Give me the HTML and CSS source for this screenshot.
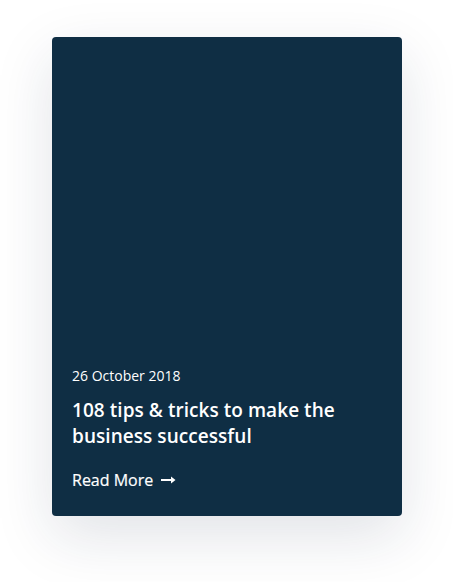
FILE: index.html
```html
<!DOCTYPE html>
<html>
<head>
<meta charset="utf-8">
<link rel="stylesheet" href="styles.css">
</head>
<body>
<div class="page">
  <article class="card">
    <div class="date">26 October 2018</div>
    <h2 class="title">108 tips &amp; tricks to make the business successful</h2>
    <a class="more" href="#">Read More
      <svg class="arrow" width="15" height="8" viewBox="0 0 15 8"><path d="M0 4H12.5" stroke="#fff" stroke-width="2"/><path d="M10 0.5L14.5 4L10 7.5Z" fill="#fff"/></svg>
    </a>
  </article>
</div>
</body>
</html>
```
FILE: styles.css
```css
html, body { margin: 0; padding: 0; background: #fff; }
.page { padding: 37px 51px 66px 52px; }
.card {
  box-sizing: border-box;
  width: 350px;
  height: 479px;
  background: #0f2e44;
  border-radius: 4px;
  box-shadow: 0 20px 60px rgba(20, 40, 70, 0.13);
  padding: 0 20px 25px 20px;
  display: flex;
  flex-direction: column;
  justify-content: flex-end;
  font-family: "Open Sans", "Noto Sans", sans-serif;
  color: #fff;
}
.date { font-size: 14px; line-height: 20px; margin-bottom: 11px; }
.title { font-size: 19px; font-weight: 600; line-height: 26px; margin: 0 0 20px 0; letter-spacing: 0.05px; }
.more { color: #fff; text-decoration: none; font-size: 16px; font-weight: 500; line-height: 22px; display: flex; align-items: center; gap: 8px; -webkit-text-stroke: 0.2px #fff; }
.arrow { display: block; }
```
